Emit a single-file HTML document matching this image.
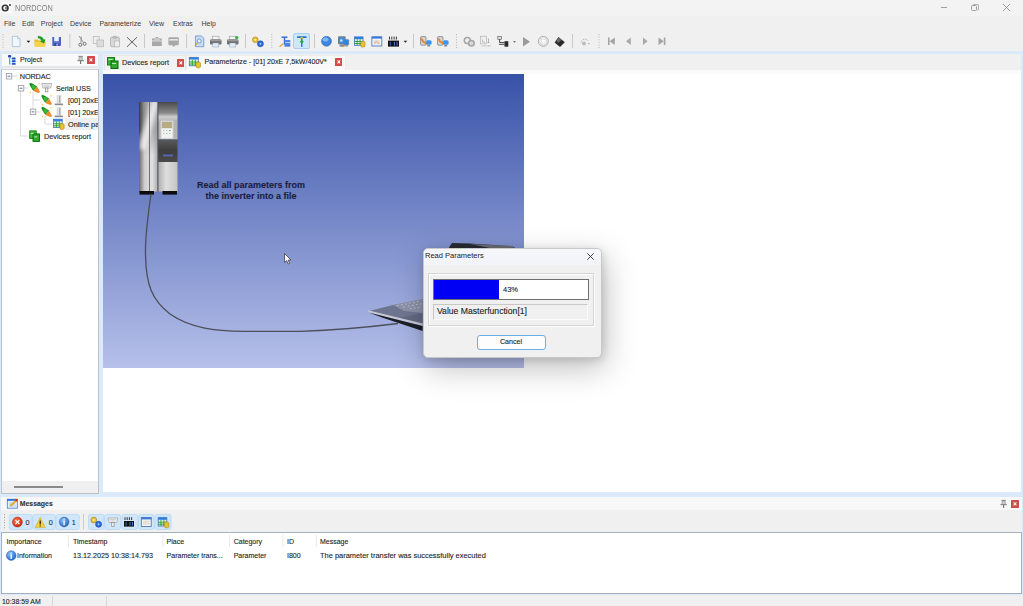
<!DOCTYPE html>
<html><head><meta charset="utf-8">
<style>
*{box-sizing:border-box;margin:0;padding:0}
html,body{width:1023px;height:606px;overflow:hidden}
body{position:relative;background:#f0f0f0;font-family:"Liberation Sans",sans-serif;color:#222}
.a{position:absolute}
.t{position:absolute;white-space:nowrap;line-height:1;-webkit-text-stroke:0.1px currentColor}
svg{position:absolute;overflow:visible}
.xr{width:7.6px;height:7.9px;background:#d24a4a;border-radius:0.6px}
</style></head><body>

<!-- title bar -->
<div class="a" style="left:0;top:0;width:1023px;height:15.6px;background:#f3f3f3"></div>
<div class="a" style="left:1px;top:2px;width:11px;height:11px;background:#fafafa"></div>
<svg style="left:1px;top:2px" width="11" height="11" viewBox="0 0 11 11"><circle cx="4.2" cy="6" r="2.8" fill="none" stroke="#333" stroke-width="1.6"/><path d="M4 6h2.5" stroke="#333" stroke-width="1.2"/><circle cx="9" cy="3" r="1" fill="#333"/></svg>
<div class="t" style="left:15px;top:3.6px;font-size:8.4px;color:#808080;-webkit-text-stroke:0;transform:scaleX(0.875);transform-origin:0 0">NORDCON</div>
<div class="a" style="left:941px;top:7px;width:6.3px;height:0.8px;background:#a0a0a0"></div>
<svg style="left:971px;top:4px" width="8" height="7"><rect x="0.5" y="1.5" width="5" height="5" rx="1" fill="none" stroke="#8a8a8a" stroke-width="0.8"/><path d="M2 1.5V1a.5.5 0 0 1 .5-.5H7a.5.5 0 0 1 .5.5v4.5a.5.5 0 0 1-.5.5h-1" fill="none" stroke="#9a9a9a" stroke-width="0.7"/></svg>
<svg style="left:1003px;top:4px" width="7" height="7"><path d="M0 0L7 7M7 0L0 7" stroke="#777" stroke-width="0.7"/></svg>

<!-- menu -->
<div class="t" style="left:4px;top:20px;font-size:7px;color:#3a3a3a;-webkit-text-stroke:0">File</div>
<div class="t" style="left:22px;top:20px;font-size:7px;color:#3a3a3a;-webkit-text-stroke:0">Edit</div>
<div class="t" style="left:40.8px;top:20px;font-size:7px;color:#3a3a3a;-webkit-text-stroke:0">Project</div>
<div class="t" style="left:70px;top:20px;font-size:7px;color:#3a3a3a;-webkit-text-stroke:0">Device</div>
<div class="t" style="left:99.4px;top:20px;font-size:7px;color:#3a3a3a;-webkit-text-stroke:0">Parameterize</div>
<div class="t" style="left:149px;top:20px;font-size:7px;color:#3a3a3a;-webkit-text-stroke:0">View</div>
<div class="t" style="left:173px;top:20px;font-size:7px;color:#3a3a3a;-webkit-text-stroke:0">Extras</div>
<div class="t" style="left:201.5px;top:20px;font-size:7px;color:#3a3a3a;-webkit-text-stroke:0">Help</div>

<!-- TOOLBAR -->
<div class="a" style="left:293.2px;top:33.2px;width:16.7px;height:15.4px;background:#cde6fa;border:1px solid #a6d0f2;border-radius:2px"></div>
<svg style="left:0;top:0" width="680" height="52" viewBox="0 0 680 52">
 <g fill="#a8a8a8">
  <circle cx="3" cy="34.5" r="0.5"/><circle cx="3" cy="37.1" r="0.5"/><circle cx="3" cy="39.7" r="0.5"/><circle cx="3" cy="42.3" r="0.5"/><circle cx="3" cy="44.9" r="0.5"/><circle cx="3" cy="47.3" r="0.5"/>
  <circle cx="271.8" cy="34.5" r="0.5"/><circle cx="271.8" cy="37.1" r="0.5"/><circle cx="271.8" cy="39.7" r="0.5"/><circle cx="271.8" cy="42.3" r="0.5"/><circle cx="271.8" cy="44.9" r="0.5"/><circle cx="271.8" cy="47.3" r="0.5"/>
  <circle cx="456.5" cy="34.5" r="0.5"/><circle cx="456.5" cy="37.1" r="0.5"/><circle cx="456.5" cy="39.7" r="0.5"/><circle cx="456.5" cy="42.3" r="0.5"/><circle cx="456.5" cy="44.9" r="0.5"/><circle cx="456.5" cy="47.3" r="0.5"/>
  <circle cx="599" cy="34.5" r="0.5"/><circle cx="599" cy="37.1" r="0.5"/><circle cx="599" cy="39.7" r="0.5"/><circle cx="599" cy="42.3" r="0.5"/><circle cx="599" cy="44.9" r="0.5"/><circle cx="599" cy="47.3" r="0.5"/>
 </g>
 <g fill="#bdbdbd">
  <rect x="69.5" y="34" width="0.75" height="14"/><rect x="144" y="34" width="0.75" height="14"/><rect x="186.3" y="34" width="0.75" height="14"/>
  <rect x="245.2" y="34" width="0.75" height="14"/><rect x="314.1" y="34" width="0.75" height="14"/><rect x="413" y="34" width="0.75" height="14"/><rect x="572.2" y="34" width="0.75" height="14"/>
 </g>
 <!-- new -->
 <path d="M12.3 36.3H17.6L20 38.7V46.6H12.3Z" fill="#f0f6fd" stroke="#9fb2cc" stroke-width="0.7"/>
 <path d="M17.6 36.3V38.7H20" fill="#dce6f2" stroke="#9fb2cc" stroke-width="0.6"/>
 <path d="M26.6 40.7H30.3L28.45 42.8Z" fill="#111"/>
 <!-- open -->
 <path d="M34.2 39.5H38L39 40.5H44.8V46.8H34.8Z" fill="#e8c038"/>
 <path d="M34.8 42H46L45 46.8H35Z" fill="#f4d44c"/>
 <path d="M38 36.3C40.5 36 43 37.5 44 40L45.2 39.5L44 43.2L40.4 41.4L41.6 40.9C41 39.3 39.8 38.3 38 38Z" fill="#22a022" stroke="#14801a" stroke-width="0.35"/>
 <!-- save -->
 <path d="M52.3 37H61V45.2Q61 46 60.2 46H53.1Q52.3 46 52.3 45.2Z" fill="#4a64c4"/>
 <rect x="54.2" y="37" width="4.6" height="4.2" fill="#eef2fa"/>
 <rect x="54.2" y="41.8" width="4.6" height="0.6" fill="#8ea0e0"/>
 <rect x="54.6" y="43.3" width="3.8" height="2.7" fill="#2c40a0"/><rect x="56.5" y="43.7" width="1.2" height="2" fill="#dfe4f4"/>
 <!-- cut -->
 <path d="M79 36L83.5 42.5M81.2 36.5L81 42.8" stroke="#8a8a8a" stroke-width="0.9" fill="none"/>
 <circle cx="80.3" cy="44.8" r="1.5" fill="none" stroke="#6a6a6a" stroke-width="0.9"/><circle cx="84.6" cy="43.8" r="1.5" fill="none" stroke="#6a6a6a" stroke-width="0.9"/>
 <!-- copy -->
 <rect x="93.2" y="36.4" width="6" height="7" fill="#ececec" stroke="#b8b8b8" stroke-width="0.7"/>
 <rect x="97" y="40" width="6.6" height="6.8" fill="#dcdcdc" stroke="#b4b4b4" stroke-width="0.7"/>
 <!-- paste -->
 <rect x="110.5" y="37.2" width="8.8" height="9.5" rx="1" fill="#d8d8d8" stroke="#a8a8a8" stroke-width="0.7"/>
 <rect x="113" y="36.3" width="3.8" height="2" rx="0.6" fill="#c8c8c8" stroke="#9a9a9a" stroke-width="0.5"/>
 <rect x="114.5" y="41" width="5" height="5.8" fill="#eeeeee" stroke="#b0b0b0" stroke-width="0.6"/>
 <!-- delete -->
 <path d="M127 37.2L137 46.8M137 37.2L127 46.8" stroke="#555" stroke-width="0.9"/>
 <!-- A -->
 <path d="M152 38.5H155L155.8 37H158L158.8 38.5H161.8V45.9H152Z" fill="#a8a8a8"/>
 <rect x="152" y="40.3" width="9.8" height="1.2" fill="#d8d8d8"/><rect x="154" y="38" width="5.8" height="2" fill="#c8c8c8"/>
 <!-- B -->
 <rect x="168.4" y="37.2" width="10.4" height="8" rx="1.3" fill="#a8a8a8"/>
 <rect x="169.4" y="39" width="8.4" height="1.6" fill="#e6e6e6"/><path d="M172 45.2H175.5L173.75 46.8Z" fill="#999"/>
 <!-- print preview -->
 <path d="M195.5 35.9H201.5L203.8 38.2V46.7H195.5Z" fill="#c8dcf4" stroke="#5a86c8" stroke-width="0.7"/>
 <circle cx="199.2" cy="41" r="2" fill="#eef4fc" stroke="#5a7ab0" stroke-width="0.7"/>
 <path d="M197.8 42.6L194.8 46" stroke="#d4a020" stroke-width="1.1"/>
 <!-- printer -->
 <rect x="212.2" y="36.2" width="6.8" height="3.6" fill="#f4f4f4" stroke="#8a8a8a" stroke-width="0.5"/>
 <rect x="210" y="39.5" width="11.5" height="5" rx="1" fill="#6e6e6e"/>
 <rect x="210.5" y="39.8" width="10.5" height="1.5" fill="#9a9a9a"/>
 <rect x="212.8" y="43" width="6" height="4" fill="#e4ecf8" stroke="#8a9ab8" stroke-width="0.5"/>
 <rect x="229.2" y="36.2" width="6.8" height="3.6" fill="#f4f4f4" stroke="#8a8a8a" stroke-width="0.5"/>
 <rect x="227" y="39.5" width="11.5" height="5" rx="1" fill="#6e6e6e"/>
 <rect x="227.5" y="39.8" width="10.5" height="1.5" fill="#9a9a9a"/>
 <rect x="229.8" y="43" width="6" height="4" fill="#e4ecf8" stroke="#8a9ab8" stroke-width="0.5"/>
 <circle cx="236.8" cy="37.6" r="1.6" fill="#30b040"/>
 <!-- key -->
 <circle cx="255.3" cy="39.8" r="2.8" fill="#e8c030" stroke="#a88010" stroke-width="0.6"/>
 <circle cx="255.3" cy="39.8" r="1" fill="#fff6c8"/>
 <circle cx="260.4" cy="43.8" r="3" fill="#2a6ad8" stroke="#1a4aa8" stroke-width="0.6"/>
 <circle cx="260.4" cy="43.8" r="1" fill="#a8c8f8"/>
 <!-- tree -->
 <rect x="281.5" y="36.5" width="6" height="1.4" fill="#2a6ad0"/>
 <rect x="283.8" y="37.5" width="1.4" height="7" fill="#2a6ad0"/>
 <rect x="284.5" y="40" width="5.8" height="2.2" fill="#4a8ae8"/><rect x="284.5" y="42.8" width="5.8" height="2.2" fill="#4a8ae8"/><rect x="284.5" y="45" width="5.8" height="1.6" fill="#3a7ae0"/>
 <path d="M283.5 43.5L279.6 46.8" stroke="#d8a830" stroke-width="1.2"/>
 <!-- selected -->
 <rect x="297" y="36.3" width="9.6" height="1.8" rx="0.6" fill="#2a72d8"/>
 <circle cx="301.8" cy="38.4" r="1.4" fill="#e8c030"/>
 <rect x="301.1" y="38.5" width="1.4" height="8.4" fill="#2a72d8"/>
 <path d="M301.8 39.8L303.8 41.8L301.8 43.8L299.8 41.8Z" fill="#28a838"/>
 <!-- globe -->
 <circle cx="326.5" cy="41.3" r="4.9" fill="#3a86e0" stroke="#2a5aa8" stroke-width="0.6"/>
 <ellipse cx="325.5" cy="39.6" rx="3" ry="2" fill="#8ec4f4" opacity="0.8"/>
 <!-- monitors -->
 <rect x="338" y="36.3" width="7.6" height="8" rx="1.2" fill="#7a7a7a"/>
 <rect x="338.9" y="37.3" width="5.8" height="6" fill="#3a90e8"/><circle cx="341.3" cy="40.5" r="1.2" fill="#cfe8ff"/>
 <rect x="339.5" y="44.3" width="5" height="2.4" rx="0.8" fill="#8a8a8a"/>
 <rect x="343.8" y="39.5" width="5" height="5.5" rx="1" fill="#2f86e0" stroke="#6a7a90" stroke-width="0.5"/>
 <rect x="344.5" y="45" width="3.6" height="1.6" rx="0.6" fill="#9a9a9a"/>
 <!-- table -->
 <g transform="translate(354 36.5)"><use href="#tbl"/></g>
 <!-- window -->
 <rect x="371.9" y="36.8" width="9.9" height="9.2" fill="#f4f6fa" stroke="#3a6ac0" stroke-width="0.8"/>
 <rect x="371.9" y="36.8" width="9.9" height="1.8" fill="#3a78d8"/>
 <rect x="373.5" y="40" width="6.5" height="4.5" fill="#e8e0d8"/><path d="M374 43.5L376.5 41.5L379.5 43.8" stroke="#d88a70" stroke-width="0.7" fill="none"/>
 <!-- bits -->
 <path d="M389.5 36.6V39.6M391.8 36.6V39.6M394.1 36.6V39.6M396.4 36.6V39.6" stroke="#222" stroke-width="0.9"/>
 <rect x="388" y="40.6" width="11" height="6" fill="#111"/>
 <rect x="389.8" y="41.8" width="0.9" height="3.8" fill="#4a7ad0"/><rect x="394" y="41.8" width="1" height="3.8" fill="#4a7ad0"/><rect x="396.6" y="41.8" width="1" height="3.8" fill="#4a7ad0"/>
 <path d="M403.6 40.8H407.3L405.45 42.8Z" fill="#222"/>
 <!-- dev orange -->
 <g id="devor"><rect x="420" y="36" width="6.5" height="9.8" rx="2" fill="#9a9a9a"/><rect x="421" y="37" width="4.5" height="7.8" rx="1.4" fill="#d4d4d4"/>
 <path d="M421.5 38.6L423 41.5L426.8 43.5L428 42" stroke="#ee8420" stroke-width="1.8" fill="none"/>
 <rect x="426.2" y="40.2" width="5.4" height="4.6" rx="1.5" fill="#3a96ec"/><rect x="427.2" y="45" width="3" height="1.6" rx="0.6" fill="#888"/></g>
 <use href="#devor" x="17"/>
 <!-- gears gray -->
 <circle cx="467.3" cy="40.4" r="3" fill="none" stroke="#a4a4a4" stroke-width="1.5"/>
 <circle cx="471.4" cy="43.3" r="2.8" fill="#d8d8d8" stroke="#a4a4a4" stroke-width="1.5"/>
 <!-- calendar gray -->
 <rect x="480.5" y="36.3" width="6" height="7.5" fill="#f0f0f0" stroke="#b4b4b4" stroke-width="0.7"/>
 <path d="M482.5 39.5V42H485" stroke="#a0a0a0" stroke-width="0.6" fill="none"/>
 <path d="M488.5 38.5V43M487.5 42L488.5 43L489.5 42" stroke="#9a9a9a" stroke-width="0.7" fill="none"/>
 <path d="M481.5 45.8H491" stroke="#b8b8b8" stroke-width="1.2" stroke-dasharray="0.8 0.5"/>
 <!-- connect -->
 <rect x="497.8" y="36.3" width="3.8" height="3" fill="#ddd" stroke="#555" stroke-width="0.6"/>
 <path d="M499.6 39.3V42.5H504.5M499 44.3H504.5" stroke="#333" stroke-width="0.9" fill="none"/>
 <rect x="504.5" y="41.2" width="3.8" height="5.5" fill="#2a2a2a"/>
 <path d="M513 41.2H516L514.5 42.8Z" fill="#555"/>
 <!-- play -->
 <path d="M523 37L530 41.7L523 46.4Z" fill="#9a9a9a"/>
 <!-- stop -->
 <circle cx="543.3" cy="41.3" r="5" fill="none" stroke="#a8a8a8" stroke-width="0.9"/>
 <circle cx="543.3" cy="41.3" r="3.6" fill="#fafafa" stroke="#c4c4c4" stroke-width="0.6"/>
 <rect x="541.5" y="39.5" width="3.6" height="3.6" fill="#fff" stroke="#d0d0d0" stroke-width="0.4"/>
 <!-- diamond -->
 <path d="M558.5 37L564.8 42.2L560 47L554.6 42.5Z" fill="#2a2a2a"/>
 <path d="M558.5 37.5L561.5 40L558 43L556.5 41Z" fill="#6a6a6a"/>
 <!-- icon -->
 <path d="M581 42.5C581.5 38.6 586.5 38 588 41" stroke="#b4b4b4" stroke-width="0.9" fill="none" stroke-dasharray="1.2 0.6"/>
 <circle cx="584" cy="43.6" r="2" fill="#bcbcbc"/>
 <path d="M587.5 43.2H590.3L588.9 44.6Z" fill="#a8a8a8"/>
 <!-- nav -->
 <rect x="608" y="37.5" width="1.6" height="7.5" fill="#a4a4a4"/><path d="M614.8 37.5V45L609.6 41.25Z" fill="#a4a4a4"/>
 <path d="M630.8 37.5V45L626 41.25Z" fill="#a8a8a8"/>
 <path d="M643 37.5V45L647.6 41.25Z" fill="#a8a8a8"/>
 <rect x="663.8" y="37.5" width="1.6" height="7.5" fill="#a4a4a4"/><path d="M658.5 37.5V45L663.8 41.25Z" fill="#a4a4a4"/>
</svg>

<!-- dock background -->
<div class="a" style="left:0;top:51px;width:1023px;height:544px;background:#dbeafb"></div>

<!-- left panel -->
<div class="a" style="left:1px;top:52.5px;width:98px;height:16px;background:#f9f9f9;border:1px solid #e2e7ee;border-bottom:none"></div>
<div class="a" style="left:2px;top:66.3px;width:96px;height:1.4px;background:#e6e6e6"></div>
<div class="a" style="left:2px;top:67.7px;width:96px;height:1.3px;background:#f0f0f0"></div>
<div class="a" style="left:1px;top:68.8px;width:98px;height:425.2px;background:#fff;border:1px solid #bcc0c8;border-top-color:#cdd2da"></div>
<div class="t" style="left:20px;top:56.8px;font-size:7.1px;color:#222">Project</div>
<svg style="left:0;top:0" width="100" height="70">
 <rect x="8" y="55" width="3.2" height="2.6" rx="0.8" fill="#1e4cc0"/>
 <rect x="9" y="57" width="1.2" height="7.5" fill="#58a8f0"/>
 <path d="M10 58.5H12M10 61.2H12M10 63.8H12" stroke="#9ad0f8" stroke-width="0.9"/>
 <rect x="12" y="57.6" width="3.6" height="1.9" rx="0.5" fill="#2050c8"/>
 <rect x="12" y="60.3" width="3.6" height="1.9" rx="0.5" fill="#2050c8"/>
 <rect x="12" y="62.9" width="3.6" height="1.9" rx="0.5" fill="#2050c8"/>
</svg>
<svg style="left:0;top:0" width="100" height="70" class="pin">
 <g id="pinI"><path d="M78.4 56.4H82.9" stroke="#7a7a7a" stroke-width="0.9"/><path d="M79.3 57H82L82.6 60.4H78.7Z" fill="#cfcfcf" stroke="#8a8a8a" stroke-width="0.6"/><path d="M77.4 60.7H84" stroke="#7a7a7a" stroke-width="0.9"/><path d="M80.65 61V64" stroke="#555" stroke-width="0.9"/></g>
</svg>
<div class="a xr" style="left:87.2px;top:56.1px;width:7.9px;height:7.9px"><svg style="left:0;top:0" width="100%" height="100%" viewBox="0 0 8 8" preserveAspectRatio="none"><path d="M2.6 2.5L5.4 5.5M5.4 2.5L2.6 5.5" stroke="#f8f2ec" stroke-width="1.1"/></svg></div>
<div class="a" style="left:2px;top:481px;width:96px;height:12px;background:#f0f0f0"></div>
<div class="a" style="left:14px;top:486px;width:49px;height:2px;background:#8a8a8a"></div>
<svg width="0" height="0" style="left:0;top:0">
<defs>
  <g id="plug">
    <path d="M0.3 1.3 L1.4 0.3 L4.2 1.6 L8.3 4.2 L4.2 8.3 L1.6 4.2 Z" fill="#179017"/>
    <path d="M2.5 2.8 L5 2.5 L7 4.6 L4.6 7 L2.8 5.2 Z" fill="#3ab83a"/>
    <path d="M8.3 4.2 L9.4 6.6 L11 9.6 L9.8 10.6 L6.6 9.4 L4.2 8.3 Z" fill="#ee8a28"/>
    <path d="M9.5 1.8L10.5 0.8M1.8 9.5L0.8 10.5" stroke="#f4d850" stroke-width="1.3"/>
  </g>
  <g id="dev">
    <rect x="2" y="0" width="4.5" height="8.3" fill="#cfcfcf"/><rect x="2.8" y="0" width="1.2" height="8.3" fill="#e8e8e8"/><rect x="4.5" y="0.5" width="0.8" height="7" fill="#a8a8a8"/>
    <rect x="0" y="8.3" width="8.3" height="1.6" fill="#8c8c8c"/>
  </g>
  <g id="rep">
    <rect x="0.5" y="0.5" width="6.5" height="7.5" fill="#3cb83c" stroke="#0e7e0e" stroke-width="0.9"/>
    <rect x="3.8" y="3.5" width="6.5" height="7.5" fill="#2ea82e" stroke="#006e00" stroke-width="0.9"/>
    <rect x="1.5" y="2.5" width="3" height="1" fill="#c8f0c8"/><rect x="5" y="6" width="3" height="1" fill="#c8f0c8"/>
  </g>
  <g id="tbl">
    <rect x="0.4" y="0.4" width="8.6" height="8.4" fill="#e8f0f8" stroke="#3a6ec8" stroke-width="0.8"/>
    <rect x="0.4" y="0.4" width="8.6" height="2.2" fill="#2f7fe0"/>
    <path d="M3.2 2.6V8.8M6.1 2.6V8.8M0.4 5H9M0.4 7H9" stroke="#20a020" stroke-width="0.9"/>
    <rect x="6.7" y="4.8" width="4.3" height="5.8" rx="1.4" fill="#e8c030" stroke="#b08a10" stroke-width="0.6"/>
  </g>
  <g id="exp">
    <rect x="0.5" y="0.5" width="5.5" height="5.5" fill="#fafafa" stroke="#9a9a9a" stroke-width="0.8"/>
    <path d="M1.8 3.25H4.7" stroke="#3a5a9a" stroke-width="0.8"/>
  </g>
</defs></svg>
<svg style="left:0;top:0" width="100" height="150">
  <g stroke="#d6d6d6" stroke-width="0.9" fill="none">
    <path d="M12 76H17"/>
    <path d="M20.5 91V136H28"/>
    <path d="M24 88H28"/>
    <path d="M33 92V109M33 100H40M36 112H40"/>
    <path d="M45 116V124H52"/>
  </g>
  <use href="#exp" x="5.8" y="73"/>
  <use href="#exp" x="17.8" y="85"/>
  <use href="#exp" x="29.8" y="108.6"/>
  <use href="#plug" x="29" y="82.5"/>
  <g transform="translate(41.3 83)">
    <path d="M0.5 0.5H10.3L9.3 5H1.5Z" fill="#f2f2f2" stroke="#a8a8a8" stroke-width="0.8"/>
    <path d="M2.2 2H8.5M2.7 3.5H8" stroke="#b8b8b8" stroke-width="0.6"/>
    <rect x="4.2" y="5" width="2.4" height="3.8" fill="#f2f2f2" stroke="#8a8a8a" stroke-width="0.7"/>
  </g>
  <use href="#plug" x="41" y="94.5"/>
  <use href="#dev" x="54.7" y="95.3"/>
  <use href="#plug" x="41" y="106.5"/>
  <use href="#dev" x="54.7" y="107.3"/>
  <use href="#tbl" x="53.2" y="118.8"/>
  <use href="#rep" x="29.2" y="130.4"/>
</svg>
<div class="a" style="left:64.8px;top:118px;width:33.2px;height:11.8px;background:#efefef"></div>
<div class="t" style="left:19.8px;top:72.9px;font-size:7.3px;letter-spacing:-0.15px;color:#222">NORDAC</div>
<div class="t" style="left:56px;top:84.9px;font-size:7.2px;letter-spacing:-0.05px;color:#222">Serial USS</div>
<div class="t" style="left:68px;top:96.9px;font-size:7.3px;letter-spacing:0;color:#222">[00] 20xE 7,5kW</div>
<div class="t" style="left:68px;top:108.9px;font-size:7.3px;letter-spacing:0;color:#222">[01] 20xE 7,5kW</div>
<div class="t" style="left:68px;top:120.9px;font-size:7.3px;letter-spacing:0;color:#222">Online parameters</div>
<div class="t" style="left:44px;top:132.9px;font-size:7.3px;color:#222">Devices report</div>
<div class="a" style="left:98px;top:69px;width:5px;height:425px;background:#dbeafb"></div>
<div class="a" style="left:98px;top:69px;width:1px;height:425px;background:#bcc0c8"></div>

<!-- content area -->
<div class="a" style="left:103px;top:54px;width:918px;height:438px;background:#fff"></div>
<div class="a" style="left:103px;top:54px;width:918px;height:16px;background:#f0f0f0"></div>
<div class="a" style="left:103px;top:70px;width:918px;height:1px;background:#e6e6e6"></div>
<div class="a" style="left:104px;top:55px;width:81.5px;height:15px;background:#f2f2f2;border:1px solid #e6e6e6;border-bottom:none"></div>
<div class="a" style="left:186px;top:54.5px;width:160px;height:16.5px;background:#f9f9f9;border:1px solid #ececec;border-bottom:none"></div>
<div class="a" style="left:103px;top:70px;width:918px;height:4px;background:#fbfbfb"></div>
<svg style="left:106.5px;top:56.8px" width="12" height="12" viewBox="0 0 12 12">
  <rect x="0.5" y="0.5" width="7" height="7.5" fill="#38b838" stroke="#108010"/>
  <rect x="4" y="4" width="7" height="7.5" fill="#30a830" stroke="#007000"/>
  <rect x="1.5" y="2" width="4" height="1" fill="#bfe8bf"/><rect x="5" y="6" width="4" height="1" fill="#bfe8bf"/>
</svg>
<div class="t" style="left:122px;top:59px;font-size:7.3px;color:#222">Devices report</div>
<div class="a xr" style="left:176.6px;top:59px"><svg style="left:0;top:0" width="100%" height="100%" viewBox="0 0 8 8" preserveAspectRatio="none"><path d="M2.6 2.5L5.4 5.5M5.4 2.5L2.6 5.5" stroke="#f8f2ec" stroke-width="1.1"/></svg></div>
<svg style="left:189px;top:56.6px" width="12" height="11" viewBox="0 0 12 11">
  <rect x="0.3" y="0.3" width="9" height="8.5" fill="#e8f0f8" stroke="#3a6ec8" stroke-width="0.8"/>
  <rect x="0.3" y="0.3" width="9" height="2.2" fill="#2f7fe0"/>
  <path d="M3.3 2.5V8.8M6.3 2.5V8.8M0.3 5H9.3M0.3 7H9.3" stroke="#20a020" stroke-width="0.9"/>
  <rect x="7" y="5" width="4.5" height="5.8" rx="1.5" fill="#e8c030" stroke="#b08a10" stroke-width="0.6"/>
</svg>
<div class="t" style="left:204.5px;top:58.8px;font-size:7.13px;color:#222">Parameterize - [01] 20xE 7,5kW/400V*</div>
<div class="a xr" style="left:334.6px;top:58.2px"><svg style="left:0;top:0" width="100%" height="100%" viewBox="0 0 8 8" preserveAspectRatio="none"><path d="M2.6 2.5L5.4 5.5M5.4 2.5L2.6 5.5" stroke="#f8f2ec" stroke-width="1.1"/></svg></div>
<div class="a" style="left:103px;top:74px;width:421px;height:294px;background:linear-gradient(#3852a8,#b6c0ea)"></div>
<!-- inverter -->
<svg style="left:0;top:0" width="200" height="200">
 <defs>
  <linearGradient id="invL" x1="0" y1="0" x2="1" y2="0"><stop offset="0" stop-color="#3a3a3a"/><stop offset="0.25" stop-color="#8a8a8a"/><stop offset="0.5" stop-color="#b0b0b0"/><stop offset="1" stop-color="#9a9a9a"/></linearGradient>
  <linearGradient id="invLow" x1="0" y1="0" x2="1" y2="0"><stop offset="0" stop-color="#6a6a6a"/><stop offset="0.3" stop-color="#d0d0d0"/><stop offset="0.7" stop-color="#e0e0e0"/><stop offset="1" stop-color="#a8a8a8"/></linearGradient>
  <linearGradient id="invV" x1="0" y1="0" x2="0" y2="1"><stop offset="0" stop-color="#fff" stop-opacity="0"/><stop offset="0.45" stop-color="#fff" stop-opacity="0"/><stop offset="0.6" stop-color="#fff" stop-opacity="1"/></linearGradient>
  <linearGradient id="invT" x1="0" y1="0" x2="0" y2="1"><stop offset="0" stop-color="#4a4a4a"/><stop offset="0.6" stop-color="#8a8a8a"/><stop offset="0.8" stop-color="#cfcfcf"/><stop offset="1" stop-color="#b8b8b8"/></linearGradient>
  <linearGradient id="invD" x1="0" y1="0" x2="0" y2="1"><stop offset="0" stop-color="#5a5a5a"/><stop offset="0.5" stop-color="#3e3e3e"/><stop offset="1" stop-color="#4a4a4a"/></linearGradient>
  <linearGradient id="invB" x1="0" y1="0" x2="1" y2="0"><stop offset="0" stop-color="#b0b0b0"/><stop offset="0.4" stop-color="#dedede"/><stop offset="1" stop-color="#c4c4c4"/></linearGradient>
 </defs>
 <rect x="139" y="102" width="19" height="89.5" fill="url(#invL)"/>
 <filter id="blur2" x="-50%" y="-50%" width="200%" height="200%"><feGaussianBlur stdDeviation="2"/></filter>
 <linearGradient id="fadeIn" x1="0" y1="0" x2="0" y2="1"><stop offset="0" stop-color="#000"/><stop offset="0.4" stop-color="#fff"/><stop offset="1" stop-color="#fff"/></linearGradient>
 <mask id="invMask"><rect x="139" y="102" width="19" height="89.5" fill="#fff"/></mask>
 <g mask="url(#invMask)">
 <mask id="lowMask"><rect x="139" y="130" width="19" height="62" fill="url(#fadeIn)"/></mask>
 <rect x="139" y="130" width="19" height="61.5" fill="url(#invLow)" mask="url(#lowMask)"/>
 <path d="M152 100H158V106L146 150H140V142Z" fill="#fff" opacity="0.75" filter="url(#blur2)"/>
 </g>
 <rect x="149.2" y="102" width="0.8" height="89.5" fill="#5a5a5a"/>
 <rect x="157.5" y="102" width="1" height="89.5" fill="#3a3a3a"/>
 <rect x="158.5" y="102" width="19" height="18.5" fill="url(#invT)"/>
 <rect x="158.5" y="120" width="19" height="19.5" fill="#b4b4b4"/>
 <rect x="160.5" y="120.5" width="13" height="18.5" fill="#d4d4d4"/>
 <rect x="162" y="122" width="10" height="6" fill="#b8ac84"/>
 <rect x="161.5" y="128.5" width="11" height="9.5" fill="#f2f2f2"/>
 <g fill="#b8c8b8"><rect x="163" y="130" width="1.5" height="1"/><rect x="166" y="130" width="1.5" height="1"/><rect x="169" y="130" width="1.5" height="1" fill="#50b050"/><rect x="163" y="133" width="1.5" height="1"/><rect x="166" y="133" width="1.5" height="1"/><rect x="169" y="133" width="1.5" height="1"/></g>
 <rect x="158.5" y="139.5" width="19" height="22.5" fill="url(#invD)"/>
 <rect x="163" y="154.5" width="10" height="2" fill="#5a6ab8" opacity="0.9"/>
 <rect x="158.5" y="162" width="19" height="29.5" fill="url(#invB)"/>
 <rect x="139.5" y="191" width="14.5" height="3.6" fill="#0c0c0c"/>
 <rect x="162.5" y="191" width="14.5" height="3.6" fill="#0c0c0c"/>
</svg>
<!-- caption -->
<div class="t" style="left:151px;top:180.3px;width:200px;text-align:center;font-size:9px;font-weight:bold;line-height:10.6px;color:#1b2040">Read all parameters from<br>the inverter into a file</div>
<!-- cable + laptop -->
<svg style="left:0;top:0" width="1023" height="606" viewBox="0 0 1023 606">
  <path d="M151 194 C148 215 145 240 145.5 255 C146 285 152 300 170 314 C190 328 215 331 244 331.3 L300 331.4 C340 330 370 327 398 323.5" fill="none" stroke="#4c4e58" stroke-width="1.3"/>
  <polygon points="369,311 392,305.3 422.6,299.2 422.6,325.5" fill="#6e7590"/>
  <polygon points="393,305 422.6,299 422.6,313 404,311" fill="#8c92aa"/>
  <g fill="#c4c8d6" opacity="0.85"><rect x="397" y="305" width="1.5" height="1"/><rect x="401" y="304" width="1.5" height="1"/><rect x="405" y="303.5" width="1.5" height="1"/><rect x="409" y="302.5" width="1.5" height="1"/><rect x="413" y="302" width="1.5" height="1"/><rect x="417" y="301" width="1.5" height="1"/><rect x="403" y="306.5" width="1.5" height="1"/><rect x="408" y="305.5" width="1.5" height="1"/><rect x="412" y="305" width="1.5" height="1"/><rect x="416" y="304" width="1.5" height="1"/><rect x="420" y="303.5" width="1.5" height="1"/><rect x="410" y="308" width="1.5" height="1"/><rect x="414" y="307.5" width="1.5" height="1"/><rect x="418" y="307" width="1.5" height="1"/></g>
  <polygon points="400,318 422.6,313 422.6,323" fill="#5a6078" opacity="0.6"/>
  <polygon points="368,310.3 422.6,323.6 422.6,326 368.8,312.6" fill="#c6cad6"/>
  <polygon points="368.8,312.6 422.6,326 422.6,331 382,317.5" fill="#1c1e26"/>
  <polygon points="449,247.5 452,243 470,243.5 512,246 515,248 449,248" fill="#2a2c34"/>
  <polygon points="470,244 512,246 514,248 490,248" fill="#9a9ca4" opacity="0.6"/>
  <path d="M284.5 253.5 L284.5 262.5 L286.7 260.6 L288.3 264 L289.6 263.4 L288.1 260.1 L291 260 Z" fill="#fff" stroke="#333" stroke-width="0.7"/>
</svg>

<!-- messages panel -->
<div class="a" style="left:1px;top:497px;width:1021px;height:97px;background:#f0f0f0"></div>
<div class="a" style="left:1px;top:497px;width:1021px;height:13px;background:#f8f8f8"></div>
<div class="t" style="left:19.8px;top:501px;font-size:6.9px;font-weight:bold;color:#333">Messages</div>
<svg style="left:0;top:0" width="1023" height="606">
 <defs>
  <radialGradient id="gErr" cx="0.4" cy="0.35" r="0.7"><stop offset="0" stop-color="#ff7a50"/><stop offset="1" stop-color="#c81e08"/></radialGradient>
  <radialGradient id="gInf" cx="0.4" cy="0.35" r="0.7"><stop offset="0" stop-color="#8cc4f8"/><stop offset="1" stop-color="#1e5ec0"/></radialGradient>
 </defs>
 <!-- messages icon -->
 <rect x="7.3" y="499.2" width="10" height="9" fill="#e8f2fc" stroke="#3a7ad8" stroke-width="0.8"/>
 <rect x="7.3" y="499.2" width="10" height="1.6" fill="#1e6ad8"/>
 <rect x="9" y="502" width="6.5" height="4.8" fill="#c8daf0"/>
 <path d="M10.5 506L16.3 500.3" stroke="#e0b020" stroke-width="1.8"/>
 <path d="M15.6 501L17.2 499.4" stroke="#d82a10" stroke-width="1.8"/>
 <!-- pin + close -->
 <g transform="translate(923 444)"><path d="M78.4 56.4H82.9" stroke="#7a7a7a" stroke-width="0.9"/><path d="M79.3 57H82L82.6 60.4H78.7Z" fill="#cfcfcf" stroke="#8a8a8a" stroke-width="0.6"/><path d="M77.4 60.7H84" stroke="#7a7a7a" stroke-width="0.9"/><path d="M80.65 61V64" stroke="#555" stroke-width="0.9"/></g>
 <!-- gripper -->
 <g fill="#9a9a9a"><circle cx="4.5" cy="514.8" r="0.55"/><circle cx="4.5" cy="517.4" r="0.55"/><circle cx="4.5" cy="520" r="0.55"/><circle cx="4.5" cy="522.6" r="0.55"/><circle cx="4.5" cy="525.2" r="0.55"/><circle cx="4.5" cy="527.8" r="0.55"/></g>
 <rect x="83" y="514" width="0.9" height="15.5" fill="#c8c8c8"/>
 <!-- buttons -->
 <g fill="#cfe6fb" stroke="#b0d6f4" stroke-width="0.7">
  <rect x="9.3" y="514.4" width="22.8" height="15.2" rx="2"/><rect x="32.7" y="514.4" width="22.7" height="15.2" rx="2"/><rect x="56.1" y="514.4" width="23.1" height="15.2" rx="2"/>
  <rect x="88.5" y="514.4" width="15.5" height="15.1" rx="2"/><rect x="104.6" y="514.4" width="15.9" height="15.1" rx="2"/><rect x="121.8" y="514.4" width="15.7" height="15.1" rx="2"/><rect x="138.5" y="514.4" width="15.6" height="15.1" rx="2"/><rect x="155" y="514.4" width="16" height="15.1" rx="2"/>
 </g>
 <circle cx="17.4" cy="522.1" r="5" fill="url(#gErr)" stroke="#b01a08" stroke-width="0.4"/>
 <path d="M15.4 520.1L19.4 524.1M19.4 520.1L15.4 524.1" stroke="#fff" stroke-width="1.2"/>
 <path d="M40.2 517.4L45.4 527.6H35Z" fill="#f2d040" stroke="#c8a020" stroke-width="0.5"/>
 <path d="M40.2 520.5V524.5M40.2 525.5V526.6" stroke="#111" stroke-width="1.1"/>
 <circle cx="64.1" cy="522" r="4.9" fill="url(#gInf)" stroke="#2a5aa8" stroke-width="0.4"/>
 <path d="M64.1 520.6V525.3" stroke="#fff" stroke-width="1.3"/><circle cx="64.1" cy="519.2" r="0.7" fill="#fff"/>
 <!-- other buttons icons -->
 <circle cx="93.8" cy="520" r="2.9" fill="#e8c030" stroke="#a88010" stroke-width="0.6"/><circle cx="93.8" cy="520" r="1" fill="#fff6c8"/>
 <circle cx="98.6" cy="524.3" r="3" fill="#2a6ad8" stroke="#1a4aa8" stroke-width="0.6"/><circle cx="98.6" cy="524.3" r="1" fill="#a8c8f8"/>
 <g transform="translate(107.5 517.5)">
    <path d="M0.5 0.5H10.3L9.3 5H1.5Z" fill="#f2f2f2" stroke="#a8a8a8" stroke-width="0.8"/>
    <path d="M2.2 2H8.5M2.7 3.5H8" stroke="#b8b8b8" stroke-width="0.6"/>
    <rect x="4.2" y="5" width="2.4" height="3.8" fill="#f2f2f2" stroke="#8a8a8a" stroke-width="0.7"/>
 </g>
 <path d="M125 517.2V520M127.2 517.2V520M129.4 517.2V520M131.6 517.2V520" stroke="#222" stroke-width="0.9"/>
 <rect x="124" y="521" width="10" height="5.6" fill="#111"/>
 <rect x="125.6" y="522" width="0.9" height="3.6" fill="#4a7ad0"/><rect x="129.5" y="522" width="1" height="3.6" fill="#4a7ad0"/><rect x="132" y="522" width="1" height="3.6" fill="#4a7ad0"/>
 <rect x="141.3" y="517.6" width="9.9" height="8.8" fill="#f4f6fa" stroke="#3a6ac0" stroke-width="0.8"/>
 <rect x="141.3" y="517.6" width="9.9" height="1.8" fill="#3a78d8"/>
 <rect x="143" y="520.6" width="6.5" height="4.2" fill="#e8e0d8"/>
 <g transform="translate(157.8 517.2)"><use href="#tbl"/></g>
</svg>
<div class="a xr" style="left:1011px;top:500px;width:8px;height:7.7px"><svg style="left:0;top:0" width="100%" height="100%" viewBox="0 0 8 8" preserveAspectRatio="none"><path d="M2.6 2.5L5.4 5.5M5.4 2.5L2.6 5.5" stroke="#f8f2ec" stroke-width="1.1"/></svg></div>
<div class="t" style="left:25.4px;top:519px;font-size:7.3px;color:#333">0</div>
<div class="t" style="left:48.8px;top:519px;font-size:7.3px;color:#333">0</div>
<div class="t" style="left:71.8px;top:519px;font-size:7.3px;color:#333">1</div>
<div class="a" style="left:1px;top:532px;width:1021px;height:62px;background:#fff;border:1px solid #a8b0bc"></div>
<svg style="left:0;top:0" width="1023" height="606">
 <!-- list headers separators -->
 <g fill="#e4e4e4"><rect x="68" y="535" width="0.8" height="12"/><rect x="162.5" y="535" width="0.8" height="12"/><rect x="229" y="535" width="0.8" height="12"/><rect x="282.5" y="535" width="0.8" height="12"/><rect x="315.8" y="535" width="0.8" height="12"/></g>
 <circle cx="11.2" cy="555.6" r="4.9" fill="url(#gInf)" stroke="#2a5aa8" stroke-width="0.4"/>
 <path d="M11.2 554.3V559" stroke="#fff" stroke-width="1.3"/><circle cx="11.2" cy="552.9" r="0.7" fill="#fff"/>
</svg>
<div class="t" style="left:6.6px;top:538px;font-size:7px;color:#222">Importance</div>
<div class="t" style="left:73px;top:538px;font-size:7px;color:#222">Timestamp</div>
<div class="t" style="left:166.6px;top:538px;font-size:7px;color:#222">Place</div>
<div class="t" style="left:233.7px;top:538px;font-size:7px;color:#222">Category</div>
<div class="t" style="left:287px;top:538px;font-size:7px;color:#222">ID</div>
<div class="t" style="left:320px;top:538px;font-size:7px;color:#222">Message</div>
<div class="t" style="left:17px;top:552px;font-size:7px;color:#222">Information</div>
<div class="t" style="left:73px;top:552px;font-size:7.2px;color:#222">13.12.2025 10:38:14.793</div>
<div class="t" style="left:166.6px;top:552px;font-size:7px;color:#222">Parameter trans...</div>
<div class="t" style="left:233.7px;top:552px;font-size:7px;color:#222">Parameter</div>
<div class="t" style="left:287px;top:552px;font-size:7px;color:#222">I800</div>
<div class="t" style="left:320px;top:552px;font-size:7.45px;color:#222">The parameter transfer was successfully executed</div>

<!-- status bar -->
<div class="t" style="left:2px;top:598.8px;font-size:6.9px;color:#222">10:38:59 AM</div>
<div class="a" style="left:52px;top:596px;width:1px;height:10px;background:#d8d8d8"></div>
<div class="a" style="left:106px;top:596px;width:1px;height:10px;background:#d8d8d8"></div>

<!-- dialog -->
<div class="a" style="left:423px;top:248px;width:179px;height:110px;border-radius:5px;background:#f0f0f0;border:1px solid #c8c8c8;box-shadow:3px 10px 32px rgba(0,0,0,0.26),1px 2px 8px rgba(0,0,0,0.14);overflow:hidden">
  <div class="a" style="left:0;top:0;width:177px;height:16px;background:linear-gradient(#f6f7fb,#f2f3f8)"></div>
</div>
<div class="t" style="left:425px;top:252.3px;font-size:7.5px;color:#1a1a1a;-webkit-text-stroke:0">Read Parameters</div>
<svg style="left:587px;top:253px" width="7" height="7"><path d="M0.3 0.3L6.7 6.7M6.7 0.3L0.3 6.7" stroke="#333" stroke-width="0.9"/></svg>
<!-- group box -->
<div class="a" style="left:428px;top:273px;width:166px;height:53px;border:1px solid #d4d4d4;box-shadow:inset 1px 1px 0 #fff,1px 1px 0 #fff"></div>
<!-- progress -->
<div class="a" style="left:433px;top:278.5px;width:156px;height:21.5px;background:#fff;border:1px solid #707070;border-width:1.3px 1px 1.3px 1px"></div>
<div class="a" style="left:434px;top:280px;width:65.2px;height:18.8px;background:#0000f4"></div>
<div class="t" style="left:503px;top:286px;font-size:7.5px;color:#222">43%</div>
<!-- status box -->
<div class="a" style="left:433px;top:304px;width:155px;height:16px;background:#f0f0f0;border:1px solid;border-color:#c8c8c8 #fafafa #fafafa #c8c8c8"></div>
<div class="t" style="left:437px;top:307.4px;font-size:8.65px;color:#222">Value Masterfunction[1]</div>
<!-- cancel -->
<div class="a" style="left:476.5px;top:334.8px;width:69.3px;height:15.2px;background:#fdfdfd;border:1.3px solid #6aaeea;border-radius:3px"></div>
<div class="t" style="left:500px;top:338.5px;font-size:7.1px;color:#222">Cancel</div>

</body></html>
